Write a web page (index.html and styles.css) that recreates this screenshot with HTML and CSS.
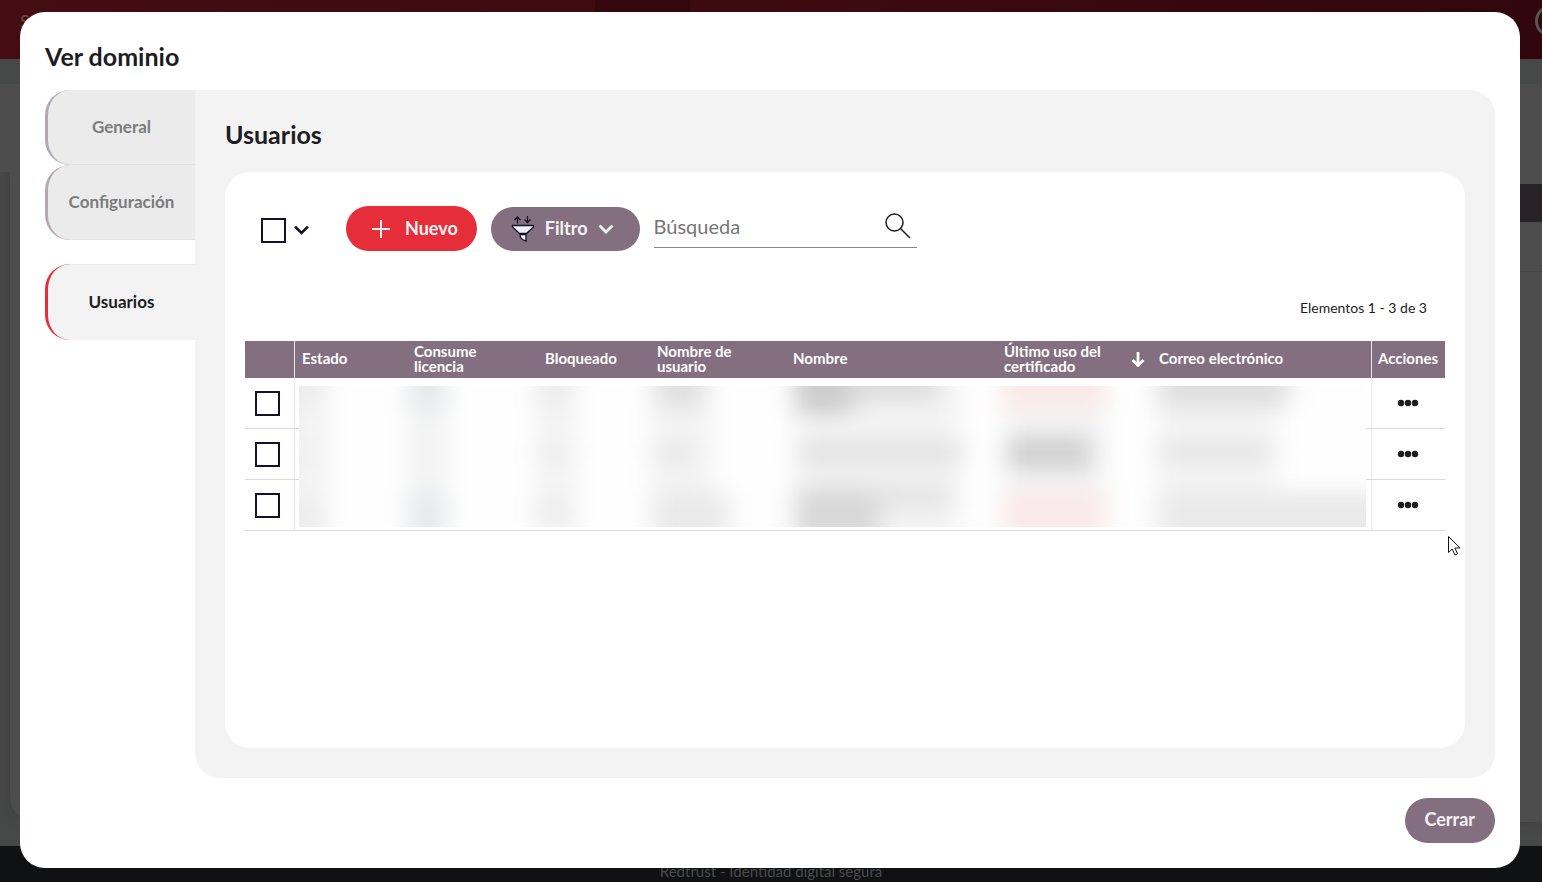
FILE: index.html
```html
<!DOCTYPE html>
<html lang="es">
<head>
<meta charset="utf-8">
<title>Ver dominio</title>
<link rel="stylesheet" href="styles.css">
</head>
<body>
<div class="app" aria-hidden="true">
  <div class="app-header">
    <span class="app-brand">S</span>
    <span class="app-menu-active"></span>
    <span class="app-avatar"></span>
  </div>
  <div class="app-main">
    <div class="app-toolbar"></div>
    <div class="app-card">
      <div class="app-card-head"></div>
      <div class="app-card-row"></div>
    </div>
  </div>
  <div class="app-footer">Redtrust - Identidad digital segura</div>
</div>

<div class="modal" role="dialog" aria-modal="true" aria-labelledby="modal-title">
  <h1 class="modal-title" id="modal-title">Ver dominio</h1>
  <div class="modal-body">
    <nav class="tabs">
      <button type="button" class="tab">General</button>
      <button type="button" class="tab">Configuración</button>
      <button type="button" class="tab tab-active">Usuarios</button>
    </nav>
    <section class="panel">
      <h2 class="panel-title">Usuarios</h2>
      <div class="card">
        <div class="toolbar">
          <div class="select-all">
            <input type="checkbox" class="check" aria-label="Seleccionar todo">
            <button type="button" class="icon-button" aria-label="Opciones de selección">
              <svg width="16" height="10" viewBox="0 0 16 10"><path d="M1 .5 7.500 7l6.500-6.500" fill="none" stroke="#14122a" stroke-width="2.600"/></svg>
            </button>
          </div>
          <button type="button" class="button button-new">
            <svg width="18" height="18" viewBox="0 0 18 18"><path d="M9 0v18M0 9h18" fill="none" stroke="#f3f3f3" stroke-width="2"/></svg>
            <span>Nuevo</span>
          </button>
          <button type="button" class="button button-filter">
            <svg width="24" height="26" viewBox="0 0 24 26" fill="none" stroke="#14122a" stroke-width="1.300">
              <path d="M6.500 7.500V1M3.500 4l3-3 3 3M16.500 0v6.500M13.500 3.500l3 3 3-3"/>
              <path d="M1.500 9.500h21v1.500l-7 6.500h-7l-7-6.500z" fill="#edf2f3"/>
              <path d="M9 18.500h6v6.500l-3.500-1.500-2-2z" fill="#edf2f3"/>
            </svg>
            <span>Filtro</span>
            <svg width="16" height="10" viewBox="0 0 16 10"><path d="M1.500 1.500 8 8l6.500-6.500" fill="none" stroke="#f3f3f3" stroke-width="2.800"/></svg>
          </button>
          <div class="search">
            <input type="search" class="search-input" placeholder="Búsqueda" aria-label="Búsqueda">
            <button type="button" class="icon-button" aria-label="Buscar">
              <svg width="26" height="26" viewBox="0 0 26 26" fill="none" stroke="#1d1d1f" stroke-width="1.500"><circle cx="9.500" cy="9.500" r="8.500"/><path d="M15.500 15.500l9.500 9.500"/></svg>
            </button>
          </div>
        </div>
        <p class="count">Elementos 1 - 3 de 3</p>
        <div class="table-wrap">
          <table class="table">
            <colgroup>
              <col class="col-check"><col class="col-state"><col class="col-license"><col class="col-blocked"><col class="col-user"><col class="col-name"><col class="col-last"><col class="col-mail"><col class="col-actions">
            </colgroup>
            <thead>
              <tr>
                <th class="cell-check"></th>
                <th>Estado</th>
                <th>Consume<br>licencia</th>
                <th>Bloqueado</th>
                <th>Nombre de<br>usuario</th>
                <th>Nombre</th>
                <th><div class="sorted"><span>Último uso del<br>certificado</span>
                  <svg width="14" height="16" viewBox="0 0 14 16"><path d="M7 1v13M1.500 9 7 14.500l5.500-5.500" fill="none" stroke="#fff" stroke-width="2.800"/></svg></div></th>
                <th>Correo electrónico</th>
                <th class="cell-actions">Acciones</th>
              </tr>
            </thead>
            <tbody>
              <tr><td class="cell-check"><input type="checkbox" class="check" aria-label="Seleccionar usuario 1"></td><td></td><td></td><td></td><td></td><td></td><td></td><td></td><td class="cell-actions"><button type="button" class="icon-button" aria-label="Acciones del usuario 1"><svg width="22" height="8" viewBox="0 0 22 8" fill="#1d1d1f"><circle cx="4" cy="4" r="3.200"/><circle cx="11" cy="4" r="3.200"/><circle cx="18" cy="4" r="3.200"/></svg></button></td></tr>
              <tr><td class="cell-check"><input type="checkbox" class="check" aria-label="Seleccionar usuario 2"></td><td></td><td></td><td></td><td></td><td></td><td></td><td></td><td class="cell-actions"><button type="button" class="icon-button" aria-label="Acciones del usuario 2"><svg width="22" height="8" viewBox="0 0 22 8" fill="#1d1d1f"><circle cx="4" cy="4" r="3.200"/><circle cx="11" cy="4" r="3.200"/><circle cx="18" cy="4" r="3.200"/></svg></button></td></tr>
              <tr><td class="cell-check"><input type="checkbox" class="check" aria-label="Seleccionar usuario 3"></td><td></td><td></td><td></td><td></td><td></td><td></td><td></td><td class="cell-actions"><button type="button" class="icon-button" aria-label="Acciones del usuario 3"><svg width="22" height="8" viewBox="0 0 22 8" fill="#1d1d1f"><circle cx="4" cy="4" r="3.200"/><circle cx="11" cy="4" r="3.200"/><circle cx="18" cy="4" r="3.200"/></svg></button></td></tr>
            </tbody>
          </table>
          <svg class="redacted" viewBox="0 0 1067 141" preserveAspectRatio="none" aria-hidden="true">
            <defs><filter id="soft" filterUnits="userSpaceOnUse" color-interpolation-filters="sRGB" x="-60" y="-60" width="1190" height="260"><feGaussianBlur stdDeviation="12 10"/></filter></defs>
            <rect width="1067" height="141" fill="#fefefe"/>
            <g filter="url(#soft)">
              <rect x="-60" y="-60" width="1190" height="260" fill="#fefefe"/>
              <g fill="#f3f3f3">
                <rect x="-30" y="-30" width="60" height="200"/><rect x="108" y="-30" width="40" height="200"/><rect x="236" y="-30" width="40" height="200"/><rect x="352" y="-30" width="60" height="200"/><rect x="495" y="-30" width="165" height="200"/><rect x="706" y="-30" width="100" height="200"/><rect x="858" y="-30" width="120" height="200"/>
              </g>
              <g fill="#ededed">
                <rect x="-20" y="-20" width="42" height="42"/><rect x="-20" y="60" width="42" height="14" fill="#efefef"/><rect x="-20" y="112" width="42" height="50"/>
                <rect x="238" y="-20" width="36" height="42"/><rect x="238" y="58" width="36" height="18"/><rect x="238" y="110" width="36" height="30"/>
              </g>
              <g fill="#e5e8eb"><rect x="112" y="-20" width="34" height="46"/><rect x="112" y="106" width="34" height="50"/></g>
              <g fill="#e0e0e0">
                <rect x="358" y="-20" width="46" height="42"/><rect x="356" y="58" width="36" height="18" fill="#e6e6e6"/><rect x="354" y="106" width="76" height="50" fill="#eaeaea"/>
                <rect x="860" y="-20" width="130" height="42"/><rect x="860" y="58" width="112" height="16" fill="#e2e2e2"/><rect x="858" y="106" width="260" height="60" fill="#eaeaea"/>
              </g>
              <g fill="#cdcdcd">
                <rect x="496" y="-30" width="58" height="58"/><rect x="550" y="-20" width="88" height="36" fill="#dedede"/>
                <rect x="500" y="54" width="164" height="22" fill="#e3e3e3"/><rect x="500" y="76" width="158" height="28" fill="#efefef"/>
                <rect x="496" y="104" width="84" height="50" fill="#d8d8d8"/><rect x="580" y="104" width="72" height="18" fill="#e3e3e3"/>
                <rect x="708" y="50" width="84" height="34" fill="#d2d2d2"/>
              </g>
              <g fill="#faeaea"><rect x="702" y="-20" width="106" height="46"/><rect x="702" y="104" width="106" height="50"/></g>
            </g>
          </svg>
        </div>
      </div>
    </section>
  </div>
  <div class="modal-footer">
    <button type="button" class="button button-close">Cerrar</button>
  </div>
</div>

<svg class="pointer" width="13" height="20" viewBox="0 0 13 20" aria-hidden="true"><path d="M.5.500v16l3.700-3.500 2.800 6 2.600-1.200-2.700-5.800h5.200z" fill="#fff" stroke="#14122a"/></svg>
</body>
</html>
```
FILE: styles.css
```css
* { box-sizing: border-box; }

body {
  margin: 0;
  height: 100vh;
  overflow: hidden;
  font-family: Lato, "Open Sans", sans-serif;
  color: #1d1d1f;
}

button, input { font-family: inherit; }

/* Dimmed application behind the dialog */
.app {
  display: flex;
  flex-direction: column;
  height: 100vh;
  background: #464948;
}
.app-header {
  display: grid;
  grid-template-columns: 595px 95px 1fr auto;
  height: 59px;
  background: linear-gradient(90deg, #430d12, #3d0a10 50%, #31060d);
}
.app-brand { padding: 10px 20px; font-size: 18px; color: #6b4a4d; }
.app-menu-active { background: #34060e; }
.app-avatar {
  grid-column: 4;
  width: 32px;
  height: 32px;
  margin: 5px -25px 0 0;
  border: 3px solid #555;
  border-radius: 50%;
}
.app-main {
  display: flex;
  flex: 1;
  flex-direction: column;
  padding: 25px 0 24px;
}
.app-toolbar { height: 88px; background: #4d4d4d; }
.app-card {
  flex: 1;
  margin-left: 10px;
  padding: 12px 0 0 20px;
  background: #4d4d4d;
  border-bottom-left-radius: 25px;
  box-shadow: 0 0 12px #3c3f3e;
  clip-path: inset(0 0 -24px -10px);
}
.app-card-head { height: 38px; background: #282126; }
.app-card-row { height: 50px; border-bottom: 1px solid #414141; }
.app-footer {
  height: 36px;
  padding-top: 15px;
  background: #101113;
  color: #4b4b4b;
  font-size: 15px;
  line-height: 20px;
  text-align: center;
}

/* Dialog */
.modal {
  position: fixed;
  inset: 12px 22px 14px 20px;
  display: flex;
  flex-direction: column;
  padding: 25px;
  border-radius: 25px;
  background: #fff;
}
.modal-title, .panel-title {
  margin: 0;
  font-size: 25px;
  font-weight: 700;
  line-height: 38px;
}
.modal-title { margin-bottom: 15px; }
.modal-body { display: flex; flex: 1; min-height: 0; }
.modal-footer { display: flex; justify-content: flex-end; margin-top: 20px; }

.tabs { display: flex; flex-direction: column; width: 150px; }
.tab {
  height: 75px;
  padding: 0 0 2px;
  border: 0 solid #b3a8b1;
  border-left-width: 3px;
  border-radius: 25px 0 0 25px;
  background: #ebebeb;
  box-shadow: inset 0 -1px #e2e2e2;
  color: #7c7c7c;
  font-size: 17px;
  font-weight: 700;
}
.tab-active {
  height: 76px;
  margin-top: 24px;
  border-color: #e62e3a;
  background: #f3f3f3;
  box-shadow: inset 0 1px #ebebeb;
  color: #1d1d1f;
}

.panel {
  display: flex;
  flex: 1;
  flex-direction: column;
  padding: 25px 30px 30px;
  border-radius: 0 25px 25px 25px;
  background: #f3f3f3;
}
.panel-title { margin-bottom: 19px; }
.card { flex: 1; padding: 34px 20px; border-radius: 25px; background: #fff; }

.toolbar { display: flex; align-items: flex-end; padding-left: 16px; }
.select-all { display: flex; align-items: center; gap: 8px; margin: 0 36px 8px 0; }
.check {
  appearance: none;
  display: block;
  width: 25px;
  height: 25px;
  margin: 0;
  border: 2px solid #14122a;
  background: #fff;
}
.icon-button { display: flex; padding: 0; border: 0; background: none; }
.button {
  display: flex;
  align-items: center;
  height: 45px;
  border: 0;
  border-radius: 23px;
  color: #f3f3f3;
  font-size: 18px;
  font-weight: 700;
}
.button span { padding-bottom: 2px; }
.button-new { gap: 15px; margin-right: 14px; padding: 0 19px 0 26px; background: #e62e3a; }
.button-filter { gap: 10px; height: 44px; margin-right: 14px; padding: 0 26px 0 20px; background: #846f81; }
.button-close { padding: 0 20px 3px; background: #846f81; }
.search {
  display: flex;
  align-items: center;
  width: 263px;
  height: 42px;
  margin-bottom: 3px;
  padding: 0 6px 2px 0;
  border-bottom: 1px solid #888;
}
.search-input {
  flex: 1;
  min-width: 0;
  padding: 0;
  border: 0;
  outline: 0;
  background: none;
  color: #1d1d1f;
  font-size: 20px;
}
.search-input::placeholder { color: #757575; }

.count {
  margin: 47px 18px 23px;
  font-size: 14px;
  line-height: 20px;
  text-align: right;
}

.table-wrap { position: relative; }
.table { width: 100%; table-layout: fixed; border-collapse: separate; border-spacing: 0; }
.col-check { width: 50px; }
.col-state { width: 112px; }
.col-license { width: 131px; }
.col-blocked { width: 112px; }
.col-user { width: 136px; }
.col-name { width: 211px; }
.col-last { width: 155px; }
.col-actions { width: 74px; }
.table th {
  height: 37px;
  padding: 0 0 2px 7px;
  background: #846f81;
  color: #fff;
  font-size: 15px;
  font-weight: 700;
  line-height: 15px;
  text-align: left;
}
.table td { height: 51px; padding: 0; border-bottom: 1px solid #d9dadb; }
.table .cell-check { padding-left: 10px; border-right: 1px solid #e6eaea; }
.table .cell-actions { padding-left: 0; padding-right: 1px; border-left: 1px solid #e6eaea; text-align: center; }
.cell-actions .icon-button { margin: 0 auto; }
.sorted { display: flex; align-items: center; justify-content: space-between; padding-right: 7px; }
.redacted {
  position: absolute;
  inset: 45px 79px 4px 54px;
  width: calc(100% - 133px);
  height: calc(100% - 49px);
}

.pointer { position: fixed; top: 536px; left: 1448px; }
```
